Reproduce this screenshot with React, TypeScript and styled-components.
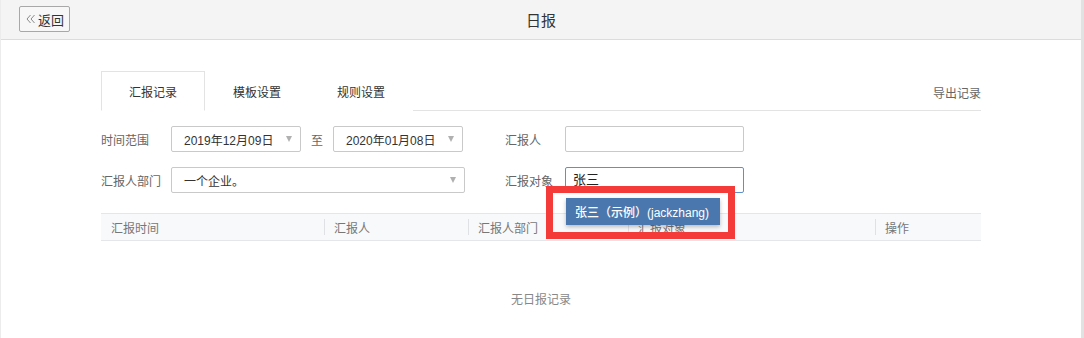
import React from "react";
import styled, { createGlobalStyle } from "styled-components";

const Global = createGlobalStyle`
  html, body { margin: 0; padding: 0; background: #fff; }
  body { font-family: "Liberation Sans", "Noto Sans CJK SC", sans-serif; font-size: 12px; color: #333; }
  * { box-sizing: border-box; }
`;

const Frame = styled.div`
  width: 1084px;
  height: 338px;
  border-left: 1px solid #ececec;
  border-right: 3px solid #e2e2e2;
  display: flex;
  flex-direction: column;
  overflow: hidden;
  & > * { flex-shrink: 0; }
`;

const Header = styled.header`
  height: 40px;
  background: #f4f4f4;
  border-bottom: 1px solid #dcdcdc;
  position: relative;
  display: flex;
  align-items: center;
  justify-content: center;
`;

const BackButton = styled.button`
  position: absolute;
  left: 18px;
  top: 6px;
  width: 51px;
  height: 26px;
  border: 1px solid #a8a8a8;
  border-radius: 2px;
  background: #f7f7f7;
  display: flex;
  align-items: center;
  gap: 3px;
  padding: 0 0 0 6px;
  font-family: inherit;
  font-size: 13px;
  color: #333;
  cursor: pointer;
`;

const Title = styled.h1`
  margin: 0;
  font-size: 15px;
  font-weight: normal;
  color: #333;
`;

const Content = styled.main`
  padding: 31px 100px 0;
  display: flex;
  flex-direction: column;
`;

const TabBar = styled.div`
  display: flex;
  align-items: flex-end;
  border-bottom: 1px solid #e3e3e3;
  height: 40px;
`;

const Tab = styled.div<{ $active?: boolean }>`
  width: 104px;
  height: 40px;
  margin-bottom: -1px;
  display: flex;
  align-items: center;
  justify-content: center;
  color: #333;
  background: #fff;
  border: 1px solid ${(p) => (p.$active ? "#e3e3e3" : "transparent")};
  border-bottom: 1px solid ${(p) => (p.$active ? "#fff" : "transparent")};
  padding-top: 1px;
`;

const Export = styled.div`
  margin-left: auto;
  color: #666;
  align-self: center;
  padding-top: 3px;
`;

const Form = styled.div`
  display: grid;
  grid-template-columns: 70px 294px 40px 60px 179px;
  grid-auto-rows: 26px;
  row-gap: 15px;
  margin-top: 15px;
  align-items: center;
`;

const Label = styled.div`
  color: #666;
`;

const RangeCell = styled.div`
  display: flex;
  align-items: center;
`;

const Sep = styled.span`
  margin: 0 10px;
  color: #666;
`;

const Select = styled.div<{ $w: number }>`
  width: ${(p) => p.$w}px;
  height: 26px;
  border: 1px solid #c9c9c9;
  border-radius: 2px;
  background: #fff;
  display: flex;
  align-items: center;
  padding: 0 8px 0 12px;
  color: #333;
`;

const SelectText = styled.span`
  flex: 1;
`;

const Arrow = styled.span`
  width: 0;
  height: 0;
  border-left: 3px solid transparent;
  border-right: 3px solid transparent;
  border-top: 6px solid #b0b0b0;
`;

const InputWrap = styled.div`
  position: relative;
  height: 26px;
`;

const Input = styled.div<{ $focus?: boolean }>`
  height: 26px;
  border: 1px solid ${(p) => (p.$focus ? "#5f90cc" : "#c9c9c9")};
  border-radius: 2px;
  background: #fff;
  display: flex;
  align-items: center;
  padding: 0 7px 3px;
  font-size: 13px;
  color: #222;
`;

const Dropdown = styled.div`
  position: absolute;
  left: 1px;
  top: 31px;
  width: 154px;
  height: 27px;
  background: #4a78ae;
  color: #fff;
  display: flex;
  align-items: center;
  padding-left: 9px;
  font-size: 12px;
  font-weight: 500;
  box-shadow: 0 2px 4px rgba(0, 0, 0, 0.25);
  z-index: 3;
  white-space: nowrap;
`;

const Highlight = styled.div`
  position: absolute;
  left: -19px;
  top: 19px;
  width: 189px;
  height: 53px;
  border: 7px solid #f53a3a;
  z-index: 4;
  pointer-events: none;
`;

const Table = styled.div`
  margin-top: 20px;
  display: flex;
  flex-direction: column;
`;

const HeadRow = styled.div`
  display: grid;
  grid-template-columns: 223px 144px 160px 247px 106px;
  height: 28px;
  background: #f8f9fb;
  border-top: 1px solid #e4e6ea;
  border-bottom: 1px solid #e4e6ea;
`;

const HeadCell = styled.div<{ $first?: boolean }>`
  display: flex;
  align-items: center;
  padding-left: 10px;
  color: #777;
  position: relative;
  &::before {
    content: "";
    display: ${(p) => (p.$first ? "none" : "block")};
    position: absolute;
    left: 0;
    top: 5px;
    bottom: 5px;
    width: 1px;
    background: #dfe1e5;
  }
`;

const Empty = styled.div`
  padding: 50px 0;
  line-height: 18px;
  text-align: center;
  color: #888;
`;

const ChevronsLeft = () => (
  <svg width="9" height="10" viewBox="0 0 9 10" fill="none" stroke="#8a8a8a" strokeWidth="1">
    <path d="M4.5 1 L1 5 L4.5 9" />
    <path d="M8.5 1 L5 5 L8.5 9" />
  </svg>
);

export default function App() {
  return (
    <>
      <Global />
      <Frame>
        <Header>
          <BackButton>
            <ChevronsLeft />
            返回
          </BackButton>
          <Title>日报</Title>
        </Header>
        <Content>
          <TabBar>
            <Tab $active>汇报记录</Tab>
            <Tab>模板设置</Tab>
            <Tab>规则设置</Tab>
            <Export>导出记录</Export>
          </TabBar>
          <Form>
            <Label>时间范围</Label>
            <RangeCell>
              <Select $w={130}>
                <SelectText>2019年12月09日</SelectText>
                <Arrow />
              </Select>
              <Sep>至</Sep>
              <Select $w={130}>
                <SelectText>2020年01月08日</SelectText>
                <Arrow />
              </Select>
            </RangeCell>
            <div />
            <Label>汇报人</Label>
            <InputWrap>
              <Input />
            </InputWrap>

            <Label>汇报人部门</Label>
            <Select $w={294}>
              <SelectText>一个企业。</SelectText>
              <Arrow />
            </Select>
            <div />
            <Label>汇报对象</Label>
            <InputWrap>
              <Input $focus>张三</Input>
              <Dropdown>张三（示例）(jackzhang)</Dropdown>
              <Highlight />
            </InputWrap>
          </Form>
          <Table>
            <HeadRow>
              <HeadCell $first>汇报时间</HeadCell>
              <HeadCell>汇报人</HeadCell>
              <HeadCell>汇报人部门</HeadCell>
              <HeadCell>汇报对象</HeadCell>
              <HeadCell>操作</HeadCell>
            </HeadRow>
            <Empty>无日报记录</Empty>
          </Table>
        </Content>
      </Frame>
    </>
  );
}
